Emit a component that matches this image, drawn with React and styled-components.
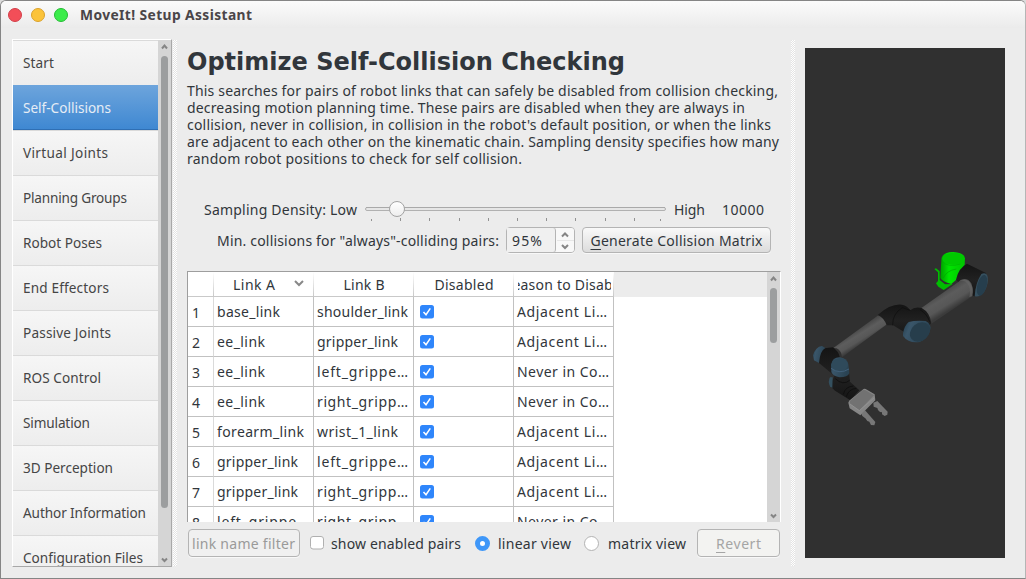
import React, { useLayoutEffect, useRef } from "react";
import styled, { createGlobalStyle } from "styled-components";

const GlobalStyle = createGlobalStyle`
  * { box-sizing: border-box; }
  html, body { margin: 0; background: #dcdcdc; overflow: hidden; }
  body { font-family: "Noto Sans", "Open Sans", sans-serif; font-size: 14px; color: #31363b; }
`;

const TextRun = styled.span`
  display: inline-block;
  flex: none;
  width: ${(p) => p.$w}px;
  white-space: pre;
  text-align: left;
`;

/* Tracks a label so that it fills exactly the given width. */
function Label({ w, children }) {
  const ref = useRef(null);
  useLayoutEffect(() => {
    const el = ref.current;
    const range = document.createRange();
    el.style.letterSpacing = "0px";
    range.selectNodeContents(el);
    const natural = range.getBoundingClientRect().width;
    const count = el.textContent.length - 1;
    if (count > 0) el.style.letterSpacing = `${(w - natural) / count}px`;
  }, [w]);
  return <TextRun ref={ref} $w={w}>{children}</TextRun>;
}

const Window = styled.div`
  display: flex;
  flex-direction: column;
  width: 1026px;
  height: 579px;
  background: #ececec;
  border: 1px solid #858585;
  border-right-color: #b5b5b5;
  border-radius: 6px 6px 0 0;
  overflow: hidden;
`;

const TitleBar = styled.header`
  display: flex;
  align-items: center;
  height: 27px;
  flex: none;
  padding-left: 7px;
  gap: 9px;
  background: linear-gradient(#fbfbfb, #ebebeb);
  font-weight: 700;
  font-size: 13.8px;
  line-height: 28px;
  color: #4a4548;
`;

const Light = styled.i`
  width: 14px;
  height: 14px;
  border-radius: 50%;
  background: ${(p) => p.$color};
  border: 1px solid ${(p) => p.$edge};
`;

const Title = styled.div`
  margin-left: 3px;
  height: 27px;
`;

const Body = styled.main`
  display: flex;
  flex: 1;
  min-height: 0;
  padding: 11px 20px 11px 11px;
`;

const Sidebar = styled.nav`
  display: flex;
  width: 160px;
  height: 528px;
  border: 1px solid #fff;
  border-right-color: #a8a8a8;
  border-bottom-color: #a8a8a8;
`;

const NavList = styled.div`
  width: 145px;
  overflow: hidden;
`;

const NavItem = styled.div`
  height: 45px;
  padding-left: 10px;
  line-height: 43px;
  font-size: 13.6px;
  border-top: 1px solid ${(p) => (p.$active ? "#6ca4dc" : "#dadada")};
  border-bottom: ${(p) => (p.$active ? "1px solid #2f6fb4" : "0")};
  color: ${(p) => (p.$active ? "#e6edf5" : "#454545")};
  background: ${(p) => (p.$active ? "linear-gradient(#6ca4dc, #3f88d2)" : "linear-gradient(#f6f6f6, #ededed)")};
`;

const ScrollTrack = styled.div`
  display: flex;
  flex-direction: column;
  align-items: center;
  width: 13px;
  height: 100%;
  flex: none;
  background: #d5d5d5;
`;

const ScrollArrow = styled.svg`
  width: 7px;
  height: 16px;
  flex: none;
  fill: none;
  stroke: #858585;
  stroke-width: 2;
`;

const Thumb = styled.div`
  width: 7px;
  height: ${(p) => p.$h}px;
  margin-bottom: auto;
  border-radius: 4px;
  background: #9c9e9f;
`;

function Scrollbar({ thumb }) {
  return (
    <ScrollTrack>
      <ScrollArrow viewBox="0 0 7 16"><path d="M1 8.5 3.5 5.5 6 8.5" /></ScrollArrow>
      <Thumb $h={thumb} />
      <ScrollArrow viewBox="0 0 7 16"><path d="M1 8.5 3.5 11 6 8.5" /></ScrollArrow>
    </ScrollTrack>
  );
}

const Splitter = styled.div`
  width: 4px;
  height: 526px;
  margin: 1px 0 0 ${(p) => p.$gap}px;
  background: conic-gradient(#fff 25%, #e4e4e4 0 50%, #fff 0 75%, #e4e4e4 0) 0 0 / 2px 2px;
`;

const Center = styled.section`
  width: 594px;
  margin-left: 10px;
  display: flex;
  flex-direction: column;
`;

const Heading = styled.h1`
  margin: 8px 0 0;
  height: 30px;
  font: 700 24px/30px "DejaVu Sans", sans-serif;
`;

const Description = styled.p`
  margin: 5px 0 0;
  height: 85px;
  line-height: 17px;
  display: flex;
  flex-direction: column;
`;

const DensityRow = styled.div`
  display: flex;
  align-items: center;
  height: 28px;
  margin-top: 29px;
  padding-left: 17px;
  gap: 8px;
  line-height: 19px;
`;

const DensityText = styled.div`
  height: 21px;
  margin-right: ${(p) => p.$after || 0}px;
`;

const SliderArt = styled.svg`
  width: 302px;
  height: 28px;
  margin-right: -1px;
  display: block;
`;

const PairsRow = styled.div`
  display: flex;
  align-items: center;
  height: 26px;
  margin-top: 3px;
  padding-left: 30px;
`;

const SpinBox = styled.div`
  display: flex;
  width: 69px;
  height: 26px;
  margin-left: 7px;
  border: 1px solid #b4b4b4;
  border-radius: 4px;
  box-shadow: 0 1px 0 #f8f8f8;
  line-height: 25px;
`;

const SpinValue = styled.div`
  width: 49px;
  padding-left: 5px;
  border-right: 1px solid #b4b4b4;
  border-radius: 0 3px 3px 0;
  background: #f0f0f0;
`;

const SpinArrows = styled.svg`
  width: 18px;
  height: 24px;
  fill: none;
  stroke: #858585;
  stroke-width: 2;
  background: #f8f8f8;
  border-radius: 0 3px 3px 0;
`;

const Button = styled.button`
  display: flex;
  justify-content: center;
  width: ${(p) => p.$w}px;
  height: ${(p) => p.$h}px;
  margin: 0 0 0 ${(p) => p.$gap}px;
  padding: 0;
  border: 1px solid #b4b4b4;
  border-radius: 4px;
  background: ${(p) => (p.$muted ? "#f3f3f1" : "linear-gradient(#f9f9f9, #dcdcdc)")};
  box-shadow: 0 1px 0 #f8f8f8;
  color: ${(p) => (p.$muted ? "#a5a5a5" : "#31363b")};
  font: inherit;
  line-height: ${(p) => p.$h - 1}px;
`;

const Key = styled.span`
  text-decoration: underline;
  text-decoration-thickness: 1px;
  text-underline-offset: 3px;
`;

const Table = styled.div`
  display: flex;
  width: 594px;
  height: 251px;
  margin-top: 18px;
  border: 1px solid #9e9e9e;
  border-right-color: #fff;
  border-bottom: 0;
  background: #fff;
  overflow: hidden;
`;

const Grid = styled.div`
  width: 579px;
  overflow: hidden;
`;

const HeaderRow = styled.div`
  display: flex;
  height: 25px;
  background: #ececec;
`;

const HeaderCell = styled.div`
  display: flex;
  justify-content: ${(p) => (p.$sorted ? "flex-start" : "center")};
  flex: none;
  width: ${(p) => p.$w}px;
  height: 25px;
  padding-left: ${(p) => (p.$sorted ? 19 : 0)}px;
  line-height: 25px;
  background: linear-gradient(#fff, #c9c9c9) right / 1px 100% no-repeat #fff;
  border-bottom: 1px solid #c9c9c9;
`;

const HeaderClip = styled.div`
  display: flex;
  justify-content: center;
  width: 93px;
  overflow: hidden;
`;

const SortMark = styled.svg`
  width: 10px;
  height: 8px;
  margin: 7px 0 0 19px;
  fill: none;
  stroke: #888;
  stroke-width: 2;
`;

const Row = styled.div`
  display: flex;
  height: 30px;
`;

const Cell = styled.div`
  flex: none;
  width: ${(p) => (p.$index ? 26 : 100)}px;
  height: 30px;
  padding-left: ${(p) => (p.$index ? 4 : 3)}px;
  line-height: ${(p) => (p.$index ? 31 : 29)}px;
  border-right: 1px solid ${(p) => (p.$index ? "#dadada" : "#c1c1c1")};
  border-bottom: 1px solid #c1c1c1;
`;

const CheckMark = styled.svg`
  width: 14px;
  height: 14px;
  display: block;
  margin: ${(p) => p.$m};
`;

const Footer = styled.footer`
  display: flex;
  align-items: center;
  height: 28px;
  margin: 7px 0 0 1px;
`;

const Filter = styled.div`
  width: 112px;
  height: 28px;
  padding-left: 3px;
  border: 1px solid #b4b4b4;
  border-radius: 4px;
  box-shadow: 0 1px 0 #f8f8f8;
  background: #f0f0f0;
  color: #9a9a9a;
  line-height: 27px;
`;

const Radio = styled.i`
  width: 15px;
  height: 15px;
  margin: 0 ${(p) => (p.$on ? 8 : 9)}px 0 ${(p) => (p.$on ? 14 : 13)}px;
  border-radius: 50%;
  background: #fff;
  border: ${(p) => (p.$on ? "5px solid #3f97f8" : "1px solid #b3b3b3")};
`;

const Viewport = styled.svg`
  width: 200px;
  height: 510px;
  margin: 9px 0 0 10px;
  background: #303030;
`;

function Checkbox({ checked, m }) {
  return (
    <CheckMark viewBox="0 0 14 14" $m={m}>
      {checked ? (
        <>
          <rect width="14" height="13.5" rx="2.5" fill="#2f86fb" />
          <path d="M3.5 7 6 9.7 10.3 3.3" fill="none" stroke="#fff" strokeWidth="1.5" />
        </>
      ) : (
        <rect x=".5" y=".5" width="13" height="12.5" rx="2.5" fill="#fff" stroke="#b0b0b0" />
      )}
    </CheckMark>
  );
}

const navigation = [
  ["Start", 31], ["Self-Collisions", 88], ["Virtual Joints", 85], ["Planning Groups", 104],
  ["Robot Poses", 79], ["End Effectors", 86], ["Passive Joints", 88], ["ROS Control", 78],
  ["Simulation", 67], ["3D Perception", 90], ["Author Information", 123], ["Configuration Files", 120],
];

const description = [
  ["This searches for pairs of robot links that can safely be disabled from collision checking,", 591],
  ["decreasing motion planning time. These pairs are disabled when they are always in", 558],
  ["collision, never in collision, in collision in the robot's default position, or when the links", 584],
  ["are adjacent to each other on the kinematic chain. Sampling density specifies how many", 592],
  ["random robot positions to check for self collision.", 335],
];

const adjacent = ["Adjacent Li…", 90];
const never = ["Never in Co…", 92];
const leftGripper = ["left_grippe…", 91];
const rightGripper = ["right_gripp…", 91];
const gripper = ["gripper_link", 81];
const effector = ["ee_link", 48];

const pairs = [
  [["base_link", 63], ["shoulder_link", 91], adjacent],
  [effector, gripper, adjacent],
  [effector, leftGripper, never],
  [effector, rightGripper, never],
  [["forearm_link", 87], ["wrist_1_link", 81], adjacent],
  [gripper, leftGripper, adjacent],
  [gripper, rightGripper, adjacent],
  [leftGripper, rightGripper, never],
];

const ticks = [6, 35, 64, 94, 123, 152, 181, 210, 240, 269, 295];

function Slider() {
  return (
    <SliderArt viewBox="0 0 302 28">
      <rect x=".5" y="11.5" width="300" height="3" rx="1.5" fill="#e6e6e6" stroke="#b1b1b1" />
      <path d="M1 11.5H300" stroke="#a9a9a9" />
      {ticks.map((x, i) => (
        <path key={x} d={`M${x + 0.5} ${i % 10 ? 22 : 23}v${i % 10 ? 3 : 2}`} stroke="#929292" />
      ))}
      <circle cx="32" cy="13" r="7.5" fill="url(#knob)" stroke="#a3a3a3" />
      <defs>
        <linearGradient id="knob" x2="0" y2="1"><stop stopColor="#fff" /><stop offset="1" stopColor="#ededed" /></linearGradient>
      </defs>
    </SliderArt>
  );
}

function RobotArm() {
  return (
    <Viewport viewBox="0 0 200 510">
      <defs>
        <linearGradient id="tubeA" gradientUnits="userSpaceOnUse" x1="410" y1="165" x2="448" y2="226">
          <stop stopColor="#3d3d3d" /><stop offset=".45" stopColor="#5c5c5c" /><stop offset=".75" stopColor="#575757" /><stop offset="1" stopColor="#3b3b3b" />
        </linearGradient>
        <linearGradient id="tubeB" gradientUnits="userSpaceOnUse" x1="165" y1="278" x2="193" y2="323">
          <stop stopColor="#3d3d3d" /><stop offset=".45" stopColor="#5d5d5d" /><stop offset=".75" stopColor="#575757" /><stop offset="1" stopColor="#3b3b3b" />
        </linearGradient>
        <linearGradient id="base" x2="1" y2="0">
          <stop stopColor="#009d00" /><stop offset=".35" stopColor="#00e600" /><stop offset="1" stopColor="#00c400" />
        </linearGradient>
        <linearGradient id="cap" x2="1" y2=".3">
          <stop stopColor="#253e4e" /><stop offset=".3" stopColor="#3a566a" /><stop offset="1" stopColor="#2a4353" />
        </linearGradient>
        <linearGradient id="joint" x2="0" y2="1">
          <stop stopColor="#141414" /><stop offset=".5" stopColor="#212121" /><stop offset="1" stopColor="#151515" />
        </linearGradient>
      </defs>
      <g transform="translate(-5 187) scale(.33333)">
        <path d="M403 102 408 100 419 109 419 135 435 148 458 147 431 165 415 155 408 145 414 138 414 112Z" fill="#00bd00" />
        <path d="M424 75Q424 52 460 51Q493 53 495 70L494 90 474 130 454 147Q427 140 421 129Z" fill="url(#base)" />
        <ellipse cx="460" cy="71" rx="33" ry="18" fill="#00c900" />
        <path d="M426 79Q444 99 482 87" fill="none" stroke="#00b200" strokeWidth="2" />
        <path d="M430 129Q439 107 469 102" fill="none" stroke="#00a800" strokeWidth="2" />
        <path d="M468 134Q475 99 501 86L558 114 542 180 522 184 483 150Z" fill="url(#joint)" />
        <path d="M363 220 478 139Q493 128 506 138Q522 155 517 183L394 266 383 250Z" fill="url(#tubeA)" />
        <path d="M482 135Q502 126 514 145Q522 166 516 184L508 186Q514 160 503 146Q493 133 475 140Z" fill="#666" opacity=".65" />
        <path d="M524 184Q526 145 544 117Q558 110 563 125Q566 148 552 171Q540 187 524 184Z" fill="#36505f" />
        <ellipse cx="546" cy="151" rx="14" ry="32" transform="rotate(15 546 151)" fill="#263e4d" />
        <path d="M100 339 237 239Q259 232 263 266L126 367Q125 348 110 340Z" fill="url(#tubeB)" />
        <path d="M233 240Q272 205 306 209Q323 213 331 226Q343 214 365 219Q390 232 394 265L353 306 314 292 279 271 260 271Q253 249 233 240Z" fill="url(#joint)" />
        <path d="M278 271Q277 236 307 218L331 226M360 224Q382 238 389 260" fill="none" stroke="#0e0e0e" strokeWidth="2" />
        <path d="M309 296Q312 273 326 261Q347 255 377 258Q390 264 392 279Q386 310 359 321Q326 326 309 303Z" fill="url(#cap)" />
        <ellipse cx="360" cy="291" rx="33" ry="26" transform="rotate(-40 360 291)" fill="#273e4c" />
        <path d="M57 350 73 340 99 337Q116 350 119 365L147 409 150 440 178 466 151 496 105 467 90 452 103 422 57 384Z" fill="url(#joint)" />
        <path d="M39 361Q47 335 66 333L76 339Q60 347 57 384L42 376Z" fill="url(#cap)" />
        <path d="M90 427Q83 440 90 454L97 459 98 427Z" fill="#34505f" />
        <path d="M106 431Q129 453 149 436M130 478Q135 455 160 453M139 485Q146 462 169 460" fill="none" stroke="#0b0b0b" strokeWidth="2" />
        <path d="M93 389Q97 367 119 367Q140 369 145 387L148 415Q143 427 119 427Q99 424 94 411Z" fill="url(#cap)" />
        <ellipse cx="119" cy="389" rx="25" ry="20" fill="#2f4a5b" />
        <path d="M93 400Q119 419 147 402" fill="none" stroke="#41607a" strokeWidth="3" />
        <path d="M220 503 232 498 263 530 262 539 254 543 246 538 246 532 240 531 234 525 232 519 221 515Z" fill="#777" />
        <path d="M184 536 195 526 226 561 223 571 213 570 208 560 202 558 196 550 187 543Z" fill="#777" />
        <path d="M145 503Q146 497 153 493L188 464Q192 460 197 462L224 478 226 496 181 541 149 520Z" fill="#868686" />
        <path d="M149 499 188 466Q193 463 197 466L222 481 178 526 150 507Z" fill="#727272" />
        <path d="M150 507 178 527 222 489" fill="none" stroke="#929292" strokeWidth="3" />
      </g>
    </Viewport>
  );
}

export default function App() {
  return (
    <Window>
      <GlobalStyle />
      <TitleBar>
        <Light $color="#f34e58" $edge="#d23f49" />
        <Light $color="#fbc33a" $edge="#dba22b" />
        <Light $color="#3cec4b" $edge="#25bd35" />
        <Title><Label w={172}>MoveIt! Setup Assistant</Label></Title>
      </TitleBar>
      <Body>
        <Sidebar>
          <NavList>
            {navigation.map(([name, w], i) => (
              <NavItem key={name} $active={i === 1}><Label w={w}>{name}</Label></NavItem>
            ))}
          </NavList>
          <Scrollbar thumb={452} />
        </Sidebar>
        <Splitter $gap={1} />
        <Center>
          <Heading><Label w={438}>Optimize Self-Collision Checking</Label></Heading>
          <Description>
            {description.map(([line, w]) => <Label key={line} w={w}>{line}</Label>)}
          </Description>
          <DensityRow>
            <DensityText><Label w={153}>Sampling Density: Low</Label></DensityText>
            <Slider />
            <DensityText $after={9}><Label w={31}>High</Label></DensityText>
            <DensityText><Label w={42}>10000</Label></DensityText>
          </DensityRow>
          <PairsRow>
            <Label w={282}>Min. collisions for "always"-colliding pairs:</Label>
            <SpinBox>
              <SpinValue><Label w={30}>95%</Label></SpinValue>
              <SpinArrows viewBox="0 0 18 24">
                <path d="M6 8.5 9 5.5 12 8.5M6 17 9 20 12 17" />
                <path d="M1 12.5H18" stroke="#e6e6e6" strokeWidth="1" />
              </SpinArrows>
            </SpinBox>
            <Button $w={189} $h={26} $gap={7}>
              <Label w={172}><Key>G</Key>enerate Collision Matrix</Label>
            </Button>
          </PairsRow>
          <Table>
            <Grid>
              <HeaderRow>
                <HeaderCell $w={26} />
                <HeaderCell $w={100} $sorted>
                  <Label w={42}>Link A</Label>
                  <SortMark viewBox="0 0 10 8"><path d="M1 2 5 6 9 2" /></SortMark>
                </HeaderCell>
                <HeaderCell $w={100}><Label w={41}>Link B</Label></HeaderCell>
                <HeaderCell $w={100}><Label w={59}>Disabled</Label></HeaderCell>
                <HeaderCell $w={100}>
                  <HeaderClip><Label w={121}>Reason to Disable</Label></HeaderClip>
                </HeaderCell>
              </HeaderRow>
              {pairs.map(([a, b, reason], i) => (
                <Row key={i}>
                  <Cell $index><Label w={8}>{i + 1}</Label></Cell>
                  <Cell><Label w={a[1]}>{a[0]}</Label></Cell>
                  <Cell><Label w={b[1]}>{b[0]}</Label></Cell>
                  <Cell><Checkbox checked m="8px 0 0 3px" /></Cell>
                  <Cell><Label w={reason[1]}>{reason[0]}</Label></Cell>
                </Row>
              ))}
            </Grid>
            <Scrollbar thumb={55} />
          </Table>
          <Footer>
            <Filter><Label w={103}>link name filter</Label></Filter>
            <Checkbox m="0 7px 0 10px" />
            <Label w={130}>show enabled pairs</Label>
            <Radio $on />
            <Label w={73}>linear view</Label>
            <Radio />
            <Label w={78}>matrix view</Label>
            <Button $w={83} $h={28} $gap={11} $muted>
              <Label w={45}><Key>R</Key>evert</Label>
            </Button>
          </Footer>
        </Center>
        <Splitter $gap={10} />
        <RobotArm />
      </Body>
    </Window>
  );
}
